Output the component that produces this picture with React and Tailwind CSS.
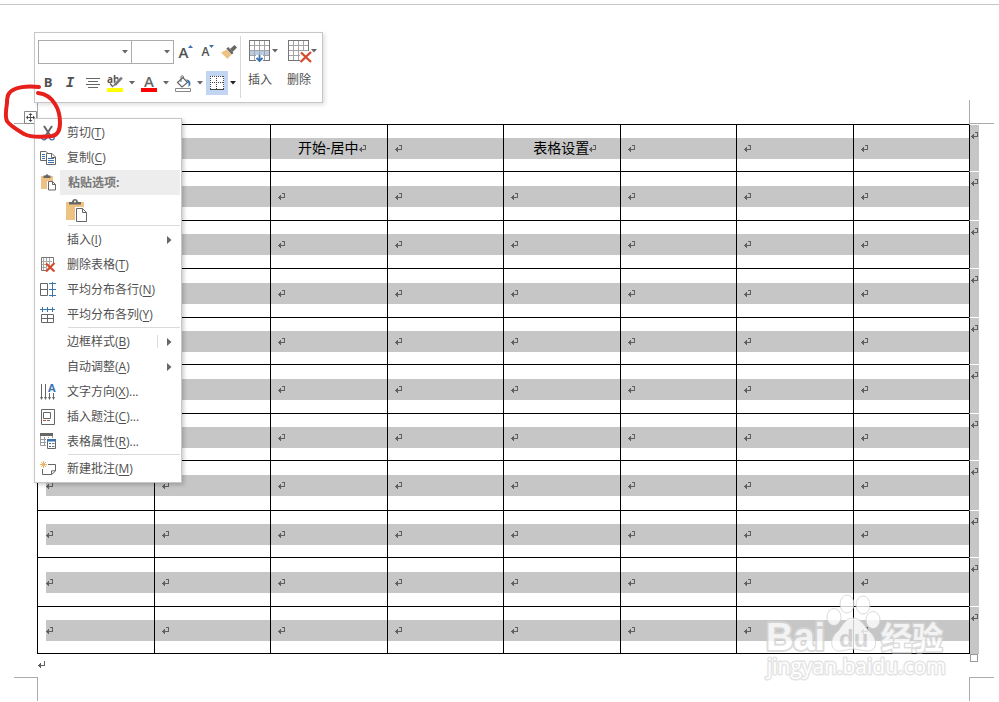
import React from "react";

const rows = [
  { height: "h-[47px]", pad: "pt-[13px]" },
  { height: "h-[49px]", pad: "pt-[14px]" },
  { height: "h-[48px]", pad: "pt-[13px]" },
  { height: "h-[49px]", pad: "pt-[14px]" },
  { height: "h-[47px]", pad: "pt-[13px]" },
  { height: "h-[49px]", pad: "pt-[14px]" },
  { height: "h-[47px]", pad: "pt-[13px]" },
  { height: "h-[50px]", pad: "pt-[14px]" },
  { height: "h-[47px]", pad: "pt-[13px]" },
  { height: "h-[49px]", pad: "pt-[14px]" },
  { height: "h-[48px]", pad: "pt-[13px]" },
];
const columns = [0, 1, 2, 3, 4, 5, 6, 7];
const headings = { 2: "开始-居中", 4: "表格设置" };

function ReturnMark({ plain }) {
  return (
    <svg width="8" height="8" viewBox="0 0 8 8" fill="#606060" shapeRendering="crispEdges" className="shrink-0">
      {!plain && <path d="M4 0H7V1H4Z" />}
      <path d="M6 0H7V5H6ZM0 4H7V5H0ZM1 3H3V6H1ZM2 2H3V7H2Z" />
    </svg>
  );
}

function Caret({ dark }) {
  return (
    <svg width="6" height="4" viewBox="0 0 6 4" className="shrink-0" aria-hidden="true">
      <path d="M0 0H6L3 3.5Z" fill={dark ? "#222" : "#666"} />
    </svg>
  );
}

function DocumentTable() {
  return (
    <table className="w-full table-fixed border-separate border-spacing-0">
      <colgroup>
        {columns.map((c) => (
          <col key={c} />
        ))}
        <col className="w-[10px]" />
      </colgroup>
      <tbody>
        {rows.map((row, r) => {
          const bottom = r === rows.length - 1 ? "border-b" : "";
          return (
            <tr key={r} className={row.height}>
              {columns.map((c) => {
                const heading = r === 0 ? headings[c] : undefined;
                return (
                  <td key={c} className={`border-t border-l border-black p-0 align-top ${bottom} ${row.pad}`}>
                    <div
                      className={`flex h-[21px] items-center bg-[#c6c6c6] text-[14px] leading-[18px] text-black ${
                        c === 0 ? "ml-2" : "pl-[7px]"
                      } ${heading ? "justify-center" : ""}`}
                    >
                      {heading && <span className="pb-0.5">{heading}</span>}
                      <ReturnMark />
                    </div>
                  </td>
                );
              })}
              <td className="border-t border-l border-t-white border-l-black bg-[#c6c6c6] p-0 pt-[7px] pl-px align-top">
                <ReturnMark />
              </td>
            </tr>
          );
        })}
      </tbody>
    </table>
  );
}

/* ---------- mini toolbar ---------- */

function Combo({ label, width }) {
  return (
    <div className={`relative h-6 ${width}`}>
      <select aria-label={label} className="h-full w-full appearance-none border border-[#ababab] bg-white">
        <option></option>
      </select>
      <span className="pointer-events-none absolute top-[10px] right-1 flex">
        <Caret />
      </span>
    </div>
  );
}

function ToolButton({ label, width, children, className = "" }) {
  return (
    <button type="button" aria-label={label} className={`flex h-6 shrink-0 items-center justify-center ${width} ${className}`}>
      {children}
    </button>
  );
}

function GridIcon({ kind }) {
  return (
    <svg width="24" height="23" viewBox="0 0 24 23" fill="none">
      <rect x=".5" y=".5" width="20" height="20" fill="#fff" />
      {kind === "insert" && <rect x="1" y="11" width="19" height="5" fill="#b9cce6" />}
      <path d="M5.5 1V20M10.5 1V20M15.5 1V20M1 5.5H20M1 10.5H20M1 15.5H20" stroke="#a3a3a3" />
      <rect x=".5" y=".5" width="20" height="20" stroke="#777" />
      {kind === "insert" ? (
        <>
          <path d="M7 15H14V23H7Z" fill="#fff" />
          <path d="M10.5 15V21M7.5 18L10.5 21L13.5 18" stroke="#3b73af" strokeWidth="1.8" />
        </>
      ) : (
        <>
          <path d="M12 11H24V23H12Z" fill="#fff" />
          <path d="M13 12.5L23 22M23 12L12.5 22" stroke="#d6492a" strokeWidth="2.3" />
        </>
      )}
    </svg>
  );
}

function MiniToolbar() {
  return (
    <div
      role="toolbar"
      aria-label="格式"
      className="absolute top-8 left-[34px] flex h-[71px] w-[289px] border border-[#c6c6c6] bg-white pl-[3px] text-[#505050] shadow-[2px_2px_4px_rgba(0,0,0,0.12)]"
    >
      <div className="flex w-[202px] flex-col gap-[7px] pt-[7px]">
        <div className="flex">
          <Combo label="字体" width="w-[94px]" />
          <div className="-ml-px">
            <Combo label="字号" width="w-[43px]" />
          </div>
          <ToolButton label="增大字号" width="w-6">
            <span className="text-[15px] leading-6 font-semibold">A</span>
            <svg width="5" height="3" viewBox="0 0 5 3" className="mb-3">
              <path d="M0 3L2.5 0L5 3Z" fill="#3b73af" />
            </svg>
          </ToolButton>
          <ToolButton label="减小字号" width="w-5">
            <span className="text-[12px] leading-6 font-semibold">A</span>
            <svg width="5" height="3" viewBox="0 0 5 3" className="mb-3">
              <path d="M0 0H5L2.5 3Z" fill="#3b73af" />
            </svg>
          </ToolButton>
          <ToolButton label="格式刷" width="w-[22px]">
            <svg width="16" height="15" viewBox="0 0 16 15">
              <path d="M0 7.5L6 4.5L10.5 9.5L6.5 14Z" fill="#eec283" />
              <path d="M5.300 3.500L7.300 2L12.500 8L10.800 9.500Z" fill="#666" />
              <path d="M9 4L13.500 0L16 2.500L11.500 7Z" fill="#666" />
            </svg>
          </ToolButton>
        </div>
        <div className="flex items-center">
          <ToolButton label="加粗" width="w-5">
            <span className="text-[13px] font-bold">B</span>
          </ToolButton>
          <ToolButton label="倾斜" width="w-6">
            <span className="font-['Liberation_Mono',monospace] text-[14px] font-bold italic">I</span>
          </ToolButton>
          <ToolButton label="居中" width="w-[22px]">
            <svg width="14" height="11" viewBox="0 0 14 11" stroke="#666">
              <path d="M0 .5H14M2 3.5H12M0 6.5H14M2 9.5H12" />
            </svg>
          </ToolButton>
          <ToolButton label="突出显示" width="w-[23px]">
            <svg width="17" height="17" viewBox="0 0 17 17" className="overflow-visible">
              <text x="0" y="8" fontSize="10" fontWeight="bold" fontFamily="Open Sans, sans-serif" fill="#555">ab</text>
              <path d="M16 3.500L9.500 10.500L5 12L7 8.500L14 1.500Z" fill="#777" stroke="#fff" strokeWidth=".6" />
              <path d="M3 8.500L6 12" stroke="#666" strokeWidth="1.500" />
              <path d="M0 13H16V17H0Z" fill="#ff0" />
            </svg>
          </ToolButton>
          <span className="ml-0.5 flex">
            <Caret />
          </span>
          <ToolButton label="字体颜色" width="w-7">
            <span className="flex w-4 flex-col items-center border-b-4 border-[#f00] text-[15px] leading-[14px] font-semibold text-[#666]">
              A
            </span>
          </ToolButton>
          <Caret />
          <ToolButton label="底纹" width="w-7">
            <svg width="17" height="17" viewBox="0 0 17 17" fill="none">
              <path d="M2.500 7.500L8 2.500L12.500 7.500L7 12Z" fill="#fff" stroke="#666" strokeWidth="1.200" />
              <path d="M6 7V1.500Q7 0 8.500 1.500V4" stroke="#666" />
              <path d="M11 4.500Q15.500 4.500 15.500 9Q15 11 13.500 12L13.500 8Z" fill="#3b73af" />
              <path d="M.5 13.500H15.500V16.500H.5Z" fill="#fff" stroke="#888" />
            </svg>
          </ToolButton>
          <Caret />
          <ToolButton label="边框" width="w-[22px]" className="ml-[3px] bg-[#c2d5f2]">
            <svg width="14" height="14" viewBox="0 0 14 14" fill="none" stroke="#444">
              <path d="M0 0H14V14H0Z" fill="#fff" stroke="none" />
              <path d="M0 .5H14M.5 0V13M6.5 0V13M13.5 0V13M0 6.5H14" strokeDasharray="1 1" />
              <path d="M0 13.5H14" />
            </svg>
          </ToolButton>
          <span className="ml-0.5 flex">
            <Caret dark />
          </span>
        </div>
      </div>
      <div className="mt-[3px] h-[62px] w-px bg-[#d8d8d8]" />
      <div className="flex gap-[7px] pt-[7px] pl-[7px]">
        {[
          ["insert", "插入"],
          ["delete", "删除"],
        ].map(([kind, label]) => (
          <button key={kind} type="button" className="flex w-8 flex-col gap-[8px] text-left text-[12px] leading-[18px]">
            <span className="flex">
              <span className="w-6 pl-px">
                <GridIcon kind={kind} />
              </span>
              <span className="mt-[9px]">
                <Caret />
              </span>
            </span>
            <span>{label}</span>
          </button>
        ))}
      </div>
    </div>
  );
}

/* ---------- context menu ---------- */

const icons = {
  cut: (
    <svg width="16" height="16" viewBox="0 0 16 16" fill="none">
      <path d="M4 1L10.500 11M12 1L5.500 11" stroke="#666" strokeWidth="2" />
      <circle cx="4" cy="12.500" r="2.300" stroke="#3b73af" strokeWidth="1.300" />
      <circle cx="12" cy="12.500" r="2.300" stroke="#3b73af" strokeWidth="1.300" />
    </svg>
  ),
  copy: (
    <svg width="16" height="16" viewBox="0 0 16 16" fill="none" stroke="#666">
      <path d="M6 10.500H.5V1.500H6L8.500 4" />
      <path d="M2 4.500H5M2 6.500H5M2 8.500H5" stroke="#3b73af" />
      <path d="M6.500 3.500H12L15.500 7V14.500H6.500Z" fill="#fff" />
      <path d="M11.500 4V7.500H15" />
      <path d="M8 8.500H14M8 10.500H14M8 12.500H14" stroke="#3b73af" />
    </svg>
  ),
  paste: (
    <svg width="16" height="17" viewBox="0 0 16 17" fill="none">
      <path d="M1 2H13V15H1Z" fill="#eec283" />
      <path d="M3.500 4V1.500H5.500Q7 -1 8.500 1.500H10.500V4Z" fill="#666" />
      <path d="M7 7H16V17H7Z" fill="#fff" />
      <path d="M8.500 7.500H12.500L15.500 10.500V16H8.500Z" fill="#fff" stroke="#666" />
      <path d="M12.500 7.500V10.500H15.500" stroke="#666" />
    </svg>
  ),
  deleteTable: (
    <svg width="16" height="16" viewBox="0 0 16 16" fill="none">
      <path d="M3.5 1V13M6.500 1V13M9.500 1V9M1 4.500H12M1 7.500H10M1 10.500H7" stroke="#aaa" />
      <path d="M7 13.500H1.500V.5H13.500V6" stroke="#777" />
      <path d="M6 6.500L14.500 14.500M14.500 6L6 14.500" stroke="#d6492a" strokeWidth="2.200" />
    </svg>
  ),
  distributeRows: (
    <svg width="16" height="15" viewBox="0 0 16 15" fill="none">
      <path d="M.5 1.500H7.500V13.500H.5ZM.5 7.500H7.500" stroke="#666" />
      <path d="M12.500 0V15M9 1.500H16M9 7.500H16M9 13.500H16" stroke="#3b73af" />
    </svg>
  ),
  distributeColumns: (
    <svg width="16" height="16" viewBox="0 0 16 16" fill="none">
      <path d="M0 2.500H15M2.500 0V5M7.500 0V5M12.500 0V5" stroke="#3b73af" />
      <path d="M1.500 7.500H13.500V15.500H1.500ZM7.500 7.500V15.500M1.500 11.500H13.500" stroke="#666" />
    </svg>
  ),
  direction: (
    <svg width="16" height="16" viewBox="0 0 16 16" fill="none" className="overflow-visible">
      <path d="M1.500 0V15M5.500 0V15M9.500 9V15M13.500 9V15" stroke="#666" />
      <path d="M0 13H3L1.500 16ZM4 13H7L5.500 16ZM8 13H11L9.500 16ZM12 13H15L13.500 16Z" fill="#666" />
      <text x="8" y="8" fontSize="11" fontWeight="bold" fontFamily="Open Sans, sans-serif" fill="#3b73af">A</text>
    </svg>
  ),
  caption: (
    <svg width="14" height="16" viewBox="0 0 14 16" fill="none" stroke="#666">
      <path d="M.5 .5H13.500V15.500H.5Z" />
      <path d="M2.500 3.500H9.500V9.500H2.500Z" />
      <path d="M2 11.500H5" stroke="#d6492a" />
      <path d="M6 11.500H9" />
    </svg>
  ),
  properties: (
    <svg width="16" height="17" viewBox="0 0 16 17" fill="none">
      <path d="M.5 1.500H12.500V12.500H.5ZM4.500 4V12M8.500 4V12M1 6.500H12M1 9.500H12" stroke="#999" />
      <path d="M0 0H13V3H0Z" fill="#666" />
      <path d="M6 5H16V17H6Z" fill="#fff" />
      <path d="M7.500 7.500H15.500V15.500H7.500Z" fill="#fff" stroke="#666" />
      <path d="M7 6H16V8.500H7Z" fill="#3b73af" />
      <path d="M9 10.500H11M9 13.500H11" stroke="#3b73af" />
      <path d="M12 10.500H14.500M12 13.500H14.500" stroke="#777" />
    </svg>
  ),
  comment: (
    <svg width="16" height="15" viewBox="0 0 16 15" fill="none">
      <path d="M8 3.500H15.500V10L11.500 13.500H2.500V8M11.500 13.500V9.800H15.500" stroke="#666" />
      <path d="M3.500 0V7M0 3.500H7M1 1L6 6M6 1L1 6" stroke="#e6b566" />
    </svg>
  ),
};

function MenuItem({ icon, label, accel, tail, submenu, split }) {
  return (
    <button type="button" role="menuitem" className="flex h-[25px] w-full items-center text-left">
      <span className="flex w-[26px] shrink-0 justify-center">{icon && icons[icon]}</span>
      <span className="grow pl-1.5 whitespace-nowrap">
        {label}(<span className="underline underline-offset-2">{accel}</span>){tail}
      </span>
      {submenu && (
        <span className={`flex h-[13px] w-6 items-center border-l pl-[9px] ${split ? "border-[#dcdcdc]" : "border-transparent"}`}>
          <svg width="5" height="8" viewBox="0 0 5 8">
            <path d="M0 0L4.500 4L0 8Z" fill="#666" />
          </svg>
        </span>
      )}
    </button>
  );
}

function Separator() {
  return <div role="separator" className="ml-[33px] mr-px mb-px h-px bg-[#d9dbdd]" />;
}

function ContextMenu() {
  return (
    <div
      role="menu"
      className="absolute top-[118px] left-[34px] w-[148px] border border-[#c6c6c6] bg-white py-px text-[12px] leading-[18px] text-[#505050] shadow-[2px_2px_4px_rgba(0,0,0,0.2)]"
    >
      <MenuItem icon="cut" label="剪切" accel="T" />
      <MenuItem icon="copy" label="复制" accel="C" />
      <div className="flex h-[25px] items-center">
        <span className="flex w-[25px] shrink-0 justify-center">{icons.paste}</span>
        <span className="mr-px flex h-full grow items-center bg-[#ededed] pl-2 font-bold text-[#777]">粘贴选项:</span>
      </div>
      <button type="button" role="menuitem" aria-label="保留源格式" className="flex h-[30px] items-center pt-0.5 pl-[31px]">
        <svg width="22" height="24" viewBox="0 0 22 24" fill="none">
          <path d="M0 3H18V21H0Z" fill="#eec283" />
          <path d="M3 5.500V3H6Q6.500 0 9 0Q11.500 0 12 3H15V5.500Z" fill="#666" />
          <circle cx="9" cy="2.500" r="1" fill="#fff" />
          <path d="M9 8H17L22 13V24H9Z" fill="#fff" />
          <path d="M10.500 9.500H16.500L20.500 13.500V22.500H10.500ZM16.500 9.500V13.500H20.500" stroke="#666" />
        </svg>
      </button>
      <Separator />
      <MenuItem label="插入" accel="I" submenu />
      <MenuItem icon="deleteTable" label="删除表格" accel="T" />
      <MenuItem icon="distributeRows" label="平均分布各行" accel="N" />
      <MenuItem icon="distributeColumns" label="平均分布各列" accel="Y" />
      <Separator />
      <MenuItem label="边框样式" accel="B" submenu split />
      <MenuItem label="自动调整" accel="A" submenu />
      <MenuItem icon="direction" label="文字方向" accel="X" tail="..." />
      <MenuItem icon="caption" label="插入题注" accel="C" tail="..." />
      <MenuItem icon="properties" label="表格属性" accel="R" tail="..." />
      <Separator />
      <MenuItem icon="comment" label="新建批注" accel="M" />
    </div>
  );
}

function Watermark() {
  return (
    <svg
      width="190"
      height="94"
      viewBox="0 0 190 94"
      className="pointer-events-none absolute top-[592px] right-[49px]"
      fill="#fff"
      stroke="#d4d4d4"
      strokeWidth="1"
      opacity=".8"
    >
      <ellipse cx="74" cy="25" rx="7" ry="8.500" />
      <ellipse cx="87" cy="12" rx="7" ry="9" />
      <ellipse cx="103" cy="13" rx="7" ry="9" />
      <ellipse cx="113" cy="28" rx="7" ry="8.500" />
      <path d="M93 26C84 26 82 36 76 41C69 48 71 59 79 59C85 59 88 57 93 57C98 57 102 59 108 59C117 59 118 48 111 41C105 36 102 26 93 26Z" />
      <text x="6" y="58" fontSize="38" fontWeight="bold" strokeWidth="4" strokeLinejoin="round" stroke="#d4d4d4" fontFamily="Liberation Sans, sans-serif" className="[paint-order:stroke]">
        Bai
      </text>
      <text x="79" y="55" fontSize="24" fontWeight="bold" fill="#d0d0d0" stroke="none" fontFamily="Liberation Sans, sans-serif">
        du
      </text>
      <text x="121" y="57" fontSize="31" fontWeight="bold" strokeWidth="3" strokeLinejoin="round" fontFamily="Noto Sans CJK SC, sans-serif" className="[paint-order:stroke]">
        经验
      </text>
      <text x="7" y="82" fontSize="21" strokeWidth="3" strokeLinejoin="round" stroke="#dedede" fontFamily="Open Sans, sans-serif" className="[paint-order:stroke]">
        jingyan.baidu.com
      </text>
    </svg>
  );
}

export default function App() {
  return (
    <main className="relative min-h-screen overflow-hidden bg-white pt-1 font-['Open_Sans','Noto_Sans_CJK_SC',sans-serif]">
      <div className="border-t border-[#c6c6c6] pt-[95px]">
        <div className="flex justify-between pr-[5px] pl-[14px]">
          <div className="h-6 w-6 border-r border-b border-[#ababab]" />
          <div className="h-6 w-[25px] border-b border-l border-[#ababab]" />
        </div>
        <div className="pr-5 pl-[37px]">
          <DocumentTable />
        </div>
        <div className="flex h-[23px] items-start justify-between pr-[21px] pl-[38px]">
          <span className="pt-[7px]">
            <ReturnMark plain />
          </span>
          <span className="h-2 w-2 border border-[#999]" />
        </div>
        <div className="flex justify-between pr-[5px] pl-[14px]">
          <div className="h-6 w-6 border-t border-r border-[#ababab]" />
          <div className="h-6 w-[25px] border-t border-l border-[#ababab]" />
        </div>
      </div>

      <Watermark />

      <svg width="13" height="13" viewBox="0 0 13 13" className="absolute top-[111px] left-6" fill="none" stroke="#555">
        <path d="M.5 .5H12.500V12.500H.5Z" fill="#fff" stroke="#888" />
        <path d="M6.500 3V10M3 6.500H10" />
        <path d="M4.500 4L6.500 2L8.500 4ZM4.500 9L6.500 11L8.500 9ZM4 4.500L2 6.500L4 8.500ZM9 4.500L11 6.500L9 8.500Z" fill="#444" stroke="none" />
      </svg>

      <MiniToolbar />
      <ContextMenu />

      <svg width="66" height="64" viewBox="0 0 66 64" className="pointer-events-none absolute top-20 left-0" fill="none" stroke="#e8201c" strokeWidth="4" strokeLinecap="round" strokeLinejoin="round">
        <path d="M39 7C30 6 20 7 15 9C8 12 7 16 7 23C6 29 5 37 7 41C10 46 18 50 24 54C32 58 44 57 52 56C58 55 60 50 60 43C60 35 59 30 55 24C51 17 46 14 38 13" />
      </svg>
    </main>
  );
}
